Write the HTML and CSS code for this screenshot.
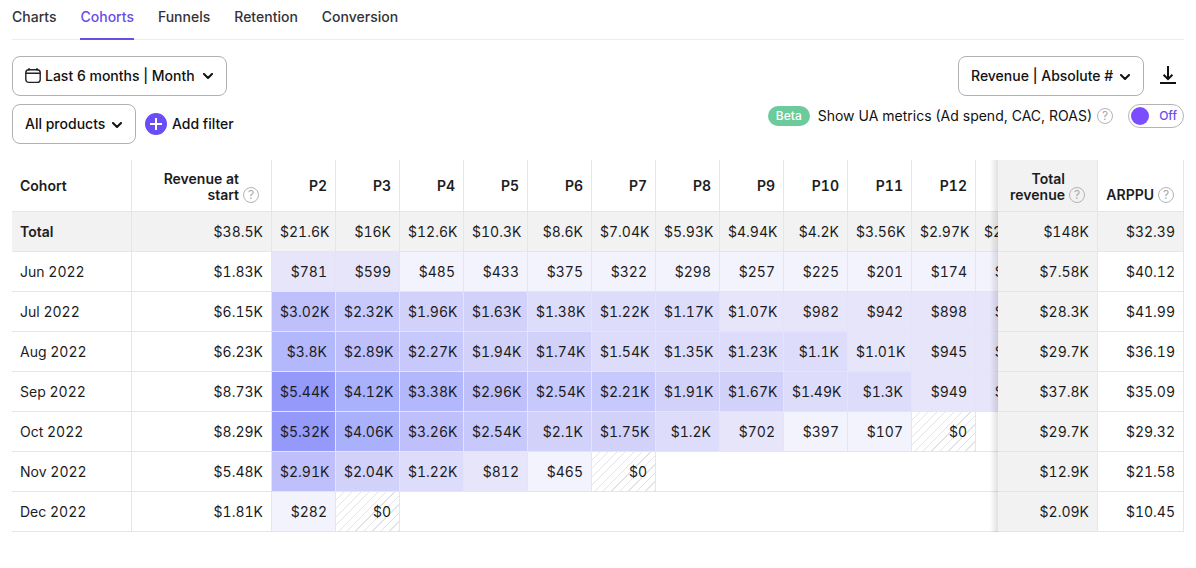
FILE: index.html
```html
<!DOCTYPE html>
<html lang="en">
<head>
<meta charset="utf-8">
<meta name="viewport" content="width=device-width, initial-scale=1">
<title>Cohorts</title>
<link rel="stylesheet" href="styles.css">
</head>
<body>
<nav class="tabs" aria-label="Analytics">
  <a class="tab" href="#charts">Charts</a>
  <a class="tab tab-active" href="#cohorts" aria-current="page">Cohorts</a>
  <a class="tab" href="#funnels">Funnels</a>
  <a class="tab" href="#retention">Retention</a>
  <a class="tab" href="#conversion">Conversion</a>
</nav>
<main>
  <div class="toolbar">
    <div class="filters">
      <button class="dropdown" type="button" aria-haspopup="dialog">
        <svg class="calendar" viewBox="0 0 16 16" width="16" height="16" aria-hidden="true"><rect x="0.8" y="1.8" width="14.4" height="12.6" rx="3"/><path d="M1 5.2h14M4 .6V2M12 .6V2"/></svg>
        <span>Last 6 months | Month</span>
        <svg class="chevron" viewBox="0 0 10 6" width="10" height="6" aria-hidden="true"><path d="M1 1l4 4 4-4"/></svg>
      </button>
      <div class="filter-row">
        <div class="dropdown-select">
          <select class="dropdown" aria-label="Products"><option>All products</option></select>
          <svg class="chevron" viewBox="0 0 10 6" width="10" height="6" aria-hidden="true"><path d="M1 1l4 4 4-4"/></svg>
        </div>
        <button class="add-filter" type="button">
          <svg viewBox="0 0 22 22" width="22" height="22" aria-hidden="true"><circle cx="11" cy="11" r="11" fill="#6b4df6"/><path d="M11 5v12M5 11h12" stroke="#fff" stroke-width="2"/></svg>
          <span>Add filter</span>
        </button>
      </div>
    </div>
    <div class="options">
      <div class="metric-row">
        <div class="dropdown-select">
          <select class="dropdown" aria-label="Metric"><option>Revenue | Absolute #</option></select>
          <svg class="chevron" viewBox="0 0 10 6" width="10" height="6" aria-hidden="true"><path d="M1 1l4 4 4-4"/></svg>
        </div>
        <button class="download" type="button" aria-label="Download">
          <svg viewBox="0 0 18 20" width="18" height="20" aria-hidden="true"><path d="M9 0v13M4.6 8.8L9 13.2l4.4-4.4M1 17h16"/></svg>
        </button>
      </div>
      <div class="ua-row">
        <span class="badge">Beta</span>
        <label class="ua-label" for="ua">Show UA metrics (Ad spend, CAC, ROAS)</label>
        <button class="help" type="button" aria-label="About UA metrics">?</button>
        <label class="toggle"><input id="ua" type="checkbox" role="switch"><span>Off</span></label>
      </div>
    </div>
  </div>

  <div class="table-scroll">
    <table class="cohorts">
      <colgroup><col class="col-cohort"><col class="col-start"><col span="12"><col class="col-total"><col class="col-arppu"></colgroup>
      <thead>
        <tr>
          <th class="name">Cohort</th>
          <th class="with-help"><div class="head"><span>Revenue at start</span><button class="help" type="button" aria-label="About revenue at start">?</button></div></th>
          <th>P2</th><th>P3</th><th>P4</th><th>P5</th><th>P6</th><th>P7</th><th>P8</th><th>P9</th><th>P10</th><th>P11</th><th>P12</th><th></th>
          <th class="with-help pin-total"><div class="head"><span>Total revenue</span><button class="help" type="button" aria-label="About total revenue">?</button></div></th>
          <th class="with-help pin-arppu"><div class="head"><span>ARPPU</span><button class="help" type="button" aria-label="About ARPPU">?</button></div></th>
        </tr>
      </thead>
      <tbody>
        <tr class="total-row"><th class="name">Total</th><td>$38.5K</td><td>$21.6K</td><td>$16K</td><td>$12.6K</td><td>$10.3K</td><td>$8.6K</td><td>$7.04K</td><td>$5.93K</td><td>$4.94K</td><td>$4.2K</td><td>$3.56K</td><td>$2.97K</td><td>$2.67K</td><td class="pin-total">$148K</td><td class="pin-arppu">$32.39</td></tr>
        <tr><th class="name">Jun 2022</th><td>$1.83K</td><td class="h2">$781</td><td class="h2">$599</td><td class="h1">$485</td><td class="h1">$433</td><td class="h1">$375</td><td class="h1">$322</td><td class="h1">$298</td><td class="h1">$257</td><td class="h1">$225</td><td class="h1">$201</td><td class="h1">$174</td><td class="h1">$152</td><td class="pin-total">$7.58K</td><td class="pin-arppu">$40.12</td></tr>
        <tr><th class="name">Jul 2022</th><td>$6.15K</td><td class="h6">$3.02K</td><td class="h5">$2.32K</td><td class="h4">$1.96K</td><td class="h4">$1.63K</td><td class="h3">$1.38K</td><td class="h3">$1.22K</td><td class="h3">$1.17K</td><td class="h2">$1.07K</td><td class="h2">$982</td><td class="h2">$942</td><td class="h2">$898</td><td class="h2">$854</td><td class="pin-total">$28.3K</td><td class="pin-arppu">$41.99</td></tr>
        <tr><th class="name">Aug 2022</th><td>$6.23K</td><td class="h7">$3.8K</td><td class="h6">$2.89K</td><td class="h5">$2.27K</td><td class="h4">$1.94K</td><td class="h4">$1.74K</td><td class="h3">$1.54K</td><td class="h3">$1.35K</td><td class="h3">$1.23K</td><td class="h3">$1.1K</td><td class="h2">$1.01K</td><td class="h2">$945</td><td class="h2">$886</td><td class="pin-total">$29.7K</td><td class="pin-arppu">$36.19</td></tr>
        <tr><th class="name">Sep 2022</th><td>$8.73K</td><td class="h10">$5.44K</td><td class="h8">$4.12K</td><td class="h7">$3.38K</td><td class="h6">$2.96K</td><td class="h5">$2.54K</td><td class="h5">$2.21K</td><td class="h4">$1.91K</td><td class="h4">$1.67K</td><td class="h3">$1.49K</td><td class="h3">$1.3K</td><td class="h2">$949</td><td class="h2">$780</td><td class="pin-total">$37.8K</td><td class="pin-arppu">$35.09</td></tr>
        <tr><th class="name">Oct 2022</th><td>$8.29K</td><td class="h10">$5.32K</td><td class="h8">$4.06K</td><td class="h6">$3.26K</td><td class="h5">$2.54K</td><td class="h4">$2.1K</td><td class="h4">$1.75K</td><td class="h3">$1.2K</td><td class="h2">$702</td><td class="h1">$397</td><td class="h1">$107</td><td class="pending">$0</td><td class="empty"></td><td class="pin-total">$29.7K</td><td class="pin-arppu">$29.32</td></tr>
        <tr><th class="name">Nov 2022</th><td>$5.48K</td><td class="h6">$2.91K</td><td class="h4">$2.04K</td><td class="h3">$1.22K</td><td class="h2">$812</td><td class="h1">$465</td><td class="pending">$0</td><td class="empty" colspan="6"></td><td class="pin-total">$12.9K</td><td class="pin-arppu">$21.58</td></tr>
        <tr><th class="name">Dec 2022</th><td>$1.81K</td><td class="h1">$282</td><td class="pending">$0</td><td class="empty" colspan="10"></td><td class="pin-total">$2.09K</td><td class="pin-arppu">$10.45</td></tr>
      </tbody>
    </table>
  </div>
</main>
</body>
</html>
```

FILE: styles.css
```css
* { box-sizing: border-box; }

body {
  margin: 0;
  padding: 0 12px;
  background: #fff;
  color: #1c1c1e;
  font: 400 14px/20px Inter, "Liberation Sans", sans-serif;
}

button, select {
  font: inherit;
  color: inherit;
  background: none;
  border: 0;
  padding: 0;
  margin: 0;
  cursor: pointer;
}

svg { display: block; flex: none; }

/* Tabs */
.tabs {
  display: flex;
  gap: 24px;
  height: 40px;
  border-bottom: 1px solid #ececee;
}
.tab {
  height: 40px;
  padding-top: 7px;
  color: #333336;
  font-weight: 500;
  text-decoration: none;
  border-bottom: 2px solid transparent;
}
.tab-active { color: #6b4de6; border-color: #6b4de6; }

/* Toolbar */
.toolbar {
  display: flex;
  justify-content: space-between;
  padding: 16px 0;
  color: #111;
  font-weight: 500;
}
.filters, .options { display: flex; flex-direction: column; gap: 8px; }
.filters { align-items: flex-start; }
.options { align-items: flex-end; }
.filter-row { display: flex; align-items: center; gap: 9px; }
.metric-row { display: flex; align-items: center; gap: 15px; }

.dropdown {
  display: flex;
  align-items: center;
  gap: 4px;
  height: 40px;
  padding: 0 13px 0 12px;
  border: 1px solid #b0b0b4;
  border-radius: 8px;
  appearance: none;
}
.dropdown .chevron { margin-left: 4px; }
.dropdown-select { position: relative; }
.dropdown-select .dropdown { padding-right: 29px; }
.dropdown-select .chevron {
  position: absolute;
  right: 14px;
  top: 18px;
  pointer-events: none;
}
.chevron { fill: none; stroke: #111; stroke-width: 2; stroke-linejoin: round; stroke-linecap: round; }
.calendar { fill: none; stroke: #222; stroke-width: 1.4; stroke-linecap: round; }
.add-filter { display: flex; align-items: center; gap: 5px; }
.download svg { fill: none; stroke: #111; stroke-width: 2; }
.download { padding-right: 7px; }

.ua-row { display: flex; align-items: center; height: 24px; font-weight: 400; }
.badge {
  padding: 0 8px;
  border-radius: 10px;
  background: #6bcb9b;
  color: #fff;
  font-size: 12px;
  font-weight: 500;
}
.ua-label { margin: 0 5px 0 8px; }

.help {
  flex: none;
  width: 16px;
  height: 16px;
  border: 1px solid #b4b4b8;
  border-radius: 50%;
  color: #a8a8ac;
  font-size: 12px;
  font-weight: 400;
  line-height: 14px;
  text-align: center;
}

.toggle {
  display: flex;
  align-items: center;
  justify-content: space-between;
  width: 56px;
  height: 24px;
  margin-left: 15px;
  padding: 0 6px 0 2px;
  border: 1px solid #b4b4b8;
  border-radius: 12px;
  color: #6b4de6;
  font-size: 12px;
  font-weight: 500;
}
.toggle input {
  appearance: none;
  width: 18px;
  height: 18px;
  margin: 0;
  border-radius: 50%;
  background: #7c4dff;
}

/* Cohort table */
.table-scroll { overflow-x: auto; scrollbar-width: none; }
.cohorts {
  width: 100%;
  min-width: 1214px;
  table-layout: fixed;
  border-collapse: separate;
  border-spacing: 0;
  font-variant-numeric: tabular-nums;
}
.col-cohort { width: 120px; }
.col-start { width: 140px; }
.col-total { width: 100px; }
.col-arppu { width: 86px; }

.cohorts th, .cohorts td {
  height: 40px;
  padding: 0 8px;
  border-right: 1px solid #e6e6e9;
  border-bottom: 1px solid #e6e6e9;
  text-align: right;
  vertical-align: middle;
  white-space: nowrap;
}
.cohorts thead th { height: 52px; font-weight: 600; }
.cohorts .name { text-align: left; }
.cohorts tbody .name { font-weight: 400; }
.cohorts .total-row .name { font-weight: 600; }
.total-row th, .total-row td { background: #f2f2f2; }

.cohorts .with-help { padding: 8px 12px 8px 8px; vertical-align: bottom; line-height: 16px; white-space: normal; }
.cohorts .with-help.pin-arppu { padding-right: 9px; }
.head { display: flex; align-items: flex-end; justify-content: flex-end; gap: 4px; }
.with-help:nth-child(2) .head { padding-left: 20px; }

.cohorts .pin-total, .cohorts .pin-arppu { position: sticky; z-index: 1; }
.pin-total { right: 86px; background: #f2f2f2; }
.pin-arppu { right: 0; background: #fff; }
.total-row .pin-arppu { background: #f2f2f2; }
.pin-total::before {
  content: "";
  position: absolute;
  right: 100%;
  top: 0;
  bottom: -1px;
  width: 8px;
  background: linear-gradient(to right, rgba(0, 0, 0, 0), rgba(0, 0, 0, 0.12));
}

.cohorts .empty { border-right: 0; }
.pending { background: repeating-linear-gradient(135deg, #fff 0 5px, #e4e4e7 5px 6px); }
.h1 { background: #f3f3fe; }
.h2 { background: #e7e5fa; }
.h3 { background: #dddcfb; }
.h4 { background: #d2d1fa; }
.h5 { background: #c7c9fc; }
.h6 { background: #bfc0fb; }
.h7 { background: #b3b7fb; }
.h8 { background: #a9b0fc; }
.h10 { background: #9499fa; }
```
